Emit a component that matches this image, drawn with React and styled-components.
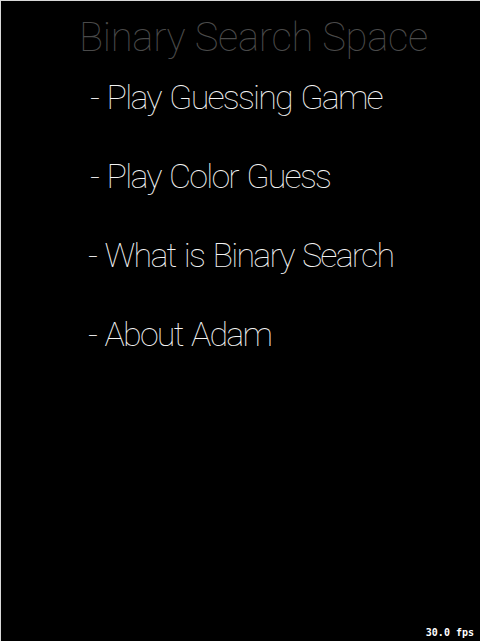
import React from "react";
import styled, { createGlobalStyle } from "styled-components";

const Global = createGlobalStyle`
  html, body { margin: 0; padding: 0; background: #000; }
  #root { width: 480px; height: 641px; }
`;

const Screen = styled.div`
  position: relative;
  box-sizing: border-box;
  width: 480px;
  height: 641px;
  background: #000;
  border-top: 1px solid #d8d8d8;
  border-left: 1px solid #d8d8d8;
  overflow: hidden;
  font-family: Roboto, "Liberation Sans", sans-serif;
  font-weight: 100;
`;

const Title = styled.h1`
  margin: 0;
  padding: 13px 0 0 78px;
  font-size: 40px;
  line-height: 48px;
  font-weight: 100;
  letter-spacing: -0.3px;
  color: #4a4a4a;
  white-space: nowrap;
`;

const Menu = styled.ul`
  list-style: none;
  margin: 0;
  padding: 13px 0 0 87px;
  display: flex;
  flex-direction: column;
  gap: 35px;
`;

const Item = styled.li`
  font-size: 34px;
  line-height: 44px;
  letter-spacing: -1.8px;
  word-spacing: 2px;
  color: #f4f4f4;
  white-space: nowrap;
  padding-left: ${(p) => p.$indent || 0}px;
`;

const Fps = styled.div`
  position: absolute;
  right: 6px;
  bottom: 3px;
  font-family: "DejaVu Sans Mono", monospace;
  font-weight: bold;
  font-size: 10px;
  color: #fff;
`;

const items = [
  { label: "- Play Guessing Game", indent: 2 },
  { label: "- Play Color Guess", indent: 2 },
  { label: "- What is Binary Search", indent: 0 },
  { label: "- About Adam", indent: 0 },
];

export default function App() {
  return (
    <>
      <Global />
      <Screen>
        <Title>Binary Search Space</Title>
        <Menu>
          {items.map((it) => (
            <Item key={it.label} $indent={it.indent}>{it.label}</Item>
          ))}
        </Menu>
        <Fps>30.0 fps</Fps>
      </Screen>
    </>
  );
}
